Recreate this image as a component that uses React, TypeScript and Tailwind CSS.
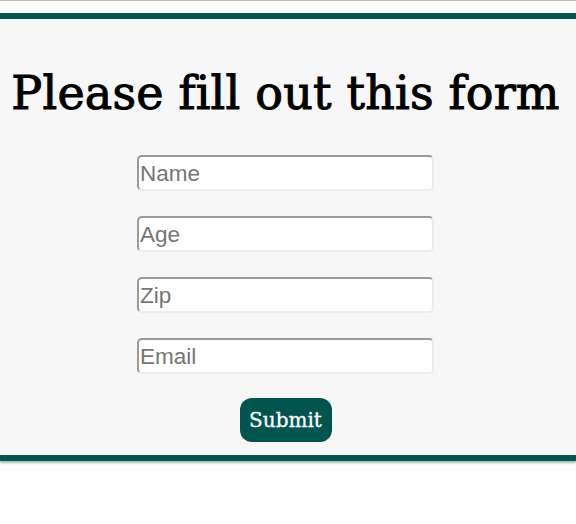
const fields = ["Name", "Age", "Zip", "Email"];

export default function App() {
  return (
    <div className="min-h-[524px] bg-white border-t border-[#bbbbbb]">
      <section className="mt-3 bg-[#f7f7f7] border-y-[6px] border-[#01554f] shadow-[0_2px_2px_rgba(0,60,60,0.35)] pt-[44px] pb-[13px] flex flex-col items-center">
        <h1 className="whitespace-nowrap mr-[5px] text-[46px] leading-[60px] text-black font-['DejaVu_Serif',serif] tracking-[0.2px] [-webkit-text-stroke:1px_black]">
          Please fill out this form
        </h1>
        <form className="mt-[32px] flex flex-col items-center gap-[25px] mr-[5px]">
          {fields.map((f) => (
            <input
              key={f}
              placeholder={f}
              className="w-[297px] h-[36px] bg-white rounded-[5px] border-2 border-t-[#9a9a9a] border-l-[#9a9a9a] border-b-[#ececec] border-r-[#ececec] px-[1px] pt-[2px] text-[22.5px] font-['Liberation_Sans',Arial,sans-serif] placeholder:text-[#767676] outline-none"
            />
          ))}
          <button
            type="button"
            className="-mt-[1px] w-[92px] h-[44px] rounded-[12px] bg-[#01554f] text-white text-[20px] font-['DejaVu_Serif',serif] [-webkit-text-stroke:0.3px_white]"
          >
            Submit
          </button>
        </form>
      </section>
    </div>
  );
}
